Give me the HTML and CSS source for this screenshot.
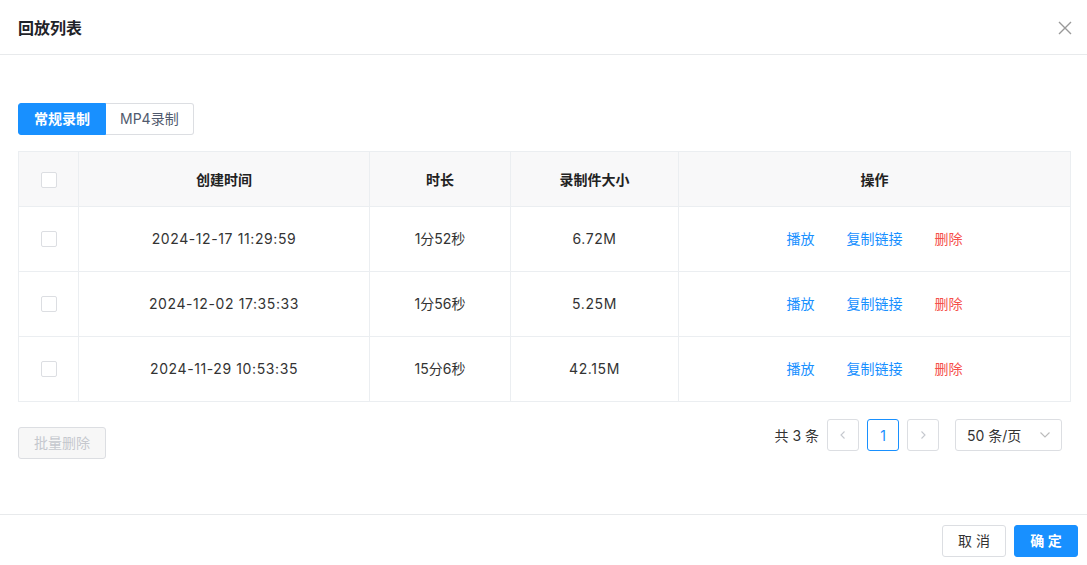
FILE: index.html
```html
<!DOCTYPE html>
<html lang="zh">
<head>
<meta charset="utf-8">
<title>回放列表</title>
<link rel="stylesheet" href="styles.css">
</head>
<body>
<div class="dialog">
  <div class="header">
    <div class="title">回放列表</div>
    <svg class="close" width="14" height="14" viewBox="0 0 14 14"><path d="M1 1L13 13M13 1L1 13" stroke="#999" stroke-width="1.4" fill="none"/></svg>
  </div>
  <div class="body">
    <div class="tabs">
      <div class="tab active">常规录制</div>
      <div class="tab">MP4录制</div>
    </div>
    <table class="grid">
      <colgroup>
        <col class="c-check"><col class="c-time"><col class="c-dur"><col class="c-size"><col class="c-op">
      </colgroup>
      <thead>
        <tr><th><span class="cb"></span></th><th>创建时间</th><th>时长</th><th>录制件大小</th><th>操作</th></tr>
      </thead>
      <tbody>
        <tr><td><span class="cb"></span></td><td class="num">2024-12-17 11:29:59</td><td>1分52秒</td><td class="num">6.72M</td><td><div class="ops"><a class="link">播放</a><a class="link">复制链接</a><a class="link del">删除</a></div></td></tr>
        <tr><td><span class="cb"></span></td><td class="num">2024-12-02 17:35:33</td><td>1分56秒</td><td class="num">5.25M</td><td><div class="ops"><a class="link">播放</a><a class="link">复制链接</a><a class="link del">删除</a></div></td></tr>
        <tr><td><span class="cb"></span></td><td class="num">2024-11-29 10:53:35</td><td>15分6秒</td><td class="num">42.15M</td><td><div class="ops"><a class="link">播放</a><a class="link">复制链接</a><a class="link del">删除</a></div></td></tr>
      </tbody>
    </table>
    <div class="bottom">
      <div class="btn disabled">批量删除</div>
      <div class="pager">
        <span class="total">共 3 条</span>
        <span class="pg"><svg width="10" height="10" viewBox="0 0 10 10"><path d="M6.5 1.5L3 5l3.5 3.5" stroke="#c5c8ce" stroke-width="1.1" fill="none"/></svg></span>
        <span class="pg cur">1</span>
        <span class="pg"><svg width="10" height="10" viewBox="0 0 10 10"><path d="M3.5 1.5L7 5L3.5 8.5" stroke="#c5c8ce" stroke-width="1.1" fill="none"/></svg></span>
        <span class="size">50 条/页<svg width="12" height="12" viewBox="0 0 12 12"><path d="M1.5 3.5L6 8l4.5-4.5" stroke="#bbb" stroke-width="1.1" fill="none"/></svg></span>
      </div>
    </div>
  </div>
  <div class="footer">
    <div class="btn">取 消</div>
    <div class="btn primary">确 定</div>
  </div>
</div>
</body>
</html>
```
FILE: styles.css
```css
* { box-sizing: border-box; }
html, body { margin: 0; padding: 0; background: #fff; }
body {
  font-family: Inter, "Noto Sans CJK SC", sans-serif;
  font-size: 14px;
  color: #333;
  width: 1087px;
  height: 565px;
  overflow: hidden;
}
.dialog { display: flex; flex-direction: column; height: 565px; }
.header {
  height: 55px;
  border-bottom: 1px solid #e8eaec;
  display: flex;
  align-items: center;
  justify-content: space-between;
  padding: 0 15px 0 18px;
}
.title { font-size: 16px; font-weight: bold; color: #1f2329; }
.close { margin-top: 2px; }
.body { flex: 1; padding: 48px 17px 0 18px; }
.tabs { display: flex; height: 32px; }
.tab {
  height: 32px;
  line-height: 30px;
  padding: 0 14px;
  border: 1px solid #dcdee2;
  color: #515a6e;
  font-size: 14px;
}
.tab.active {
  background: #1890ff;
  border-color: #1890ff;
  color: #fff;
  font-weight: bold;
  border-radius: 3px 0 0 3px;
  padding: 0 15px;
}
.tab + .tab { border-left: none; border-radius: 0 3px 3px 0; }
.grid {
  margin-top: 16px;
  width: 1052px;
  border-collapse: collapse;
  table-layout: fixed;
}
.c-check { width: 60px; }
.c-time { width: 291px; }
.c-dur { width: 141px; }
.c-size { width: 168px; }
.c-op { width: 392px; }
.grid th, .grid td {
  border: 1px solid #ebeef1;
  text-align: center;
  padding: 0;
  font-size: 14px;
  color: #333;
}
.grid th { height: 55px; background: #f8f8f9; font-weight: bold; color: #222; }
.grid td { height: 65px; padding-bottom: 2px; }
.grid td.num { letter-spacing: 0.6px; }
.cb {
  display: inline-block;
  width: 16px;
  height: 16px;
  border: 1px solid #dcdee2;
  border-radius: 2px;
  background: #fff;
  vertical-align: middle;
}
.ops { display: flex; justify-content: center; gap: 32px; }
.link { color: #1890ff; }
.link.del { color: #f5504a; }
.bottom {
  display: flex;
  justify-content: space-between;
  align-items: flex-start;
  margin-top: 17px;
  padding-right: 8px;
}
.btn {
  height: 32px;
  line-height: 30px;
  padding: 0 15px;
  border: 1px solid #dcdee2;
  border-radius: 3px;
  font-size: 14px;
  color: #333;
  background: #fff;
}
.btn.disabled { margin-top: 8px; background: #f7f7f7; color: #c5c8ce; width: 88px; text-align: center; }
.pager { display: flex; align-items: center; height: 32px; }
.total { margin-right: 8px; color: #333; }
.pg {
  width: 32px; height: 32px;
  border: 1px solid #dcdee2;
  border-radius: 3px;
  display: flex; align-items: center; justify-content: center;
  margin-right: 8px;
  color: #1890ff;
}
.pg.cur { border-color: #1890ff; }
.size {
  margin-left: 8px;
  width: 107px; height: 32px;
  border: 1px solid #dcdee2;
  border-radius: 3px;
  display: flex; align-items: center; justify-content: space-between;
  padding: 0 10px 0 11px;
  color: #333;
}
.footer {
  height: 51px;
  border-top: 1px solid #e8eaec;
  display: flex;
  justify-content: flex-end;
  align-items: flex-start;
  gap: 8px;
  padding: 10px 9px 0 0;
}
.footer .btn { width: 64px; text-align: center; padding: 0; }
.btn.primary { background: #1890ff; border-color: #1890ff; color: #fff; font-weight: bold; }
```
